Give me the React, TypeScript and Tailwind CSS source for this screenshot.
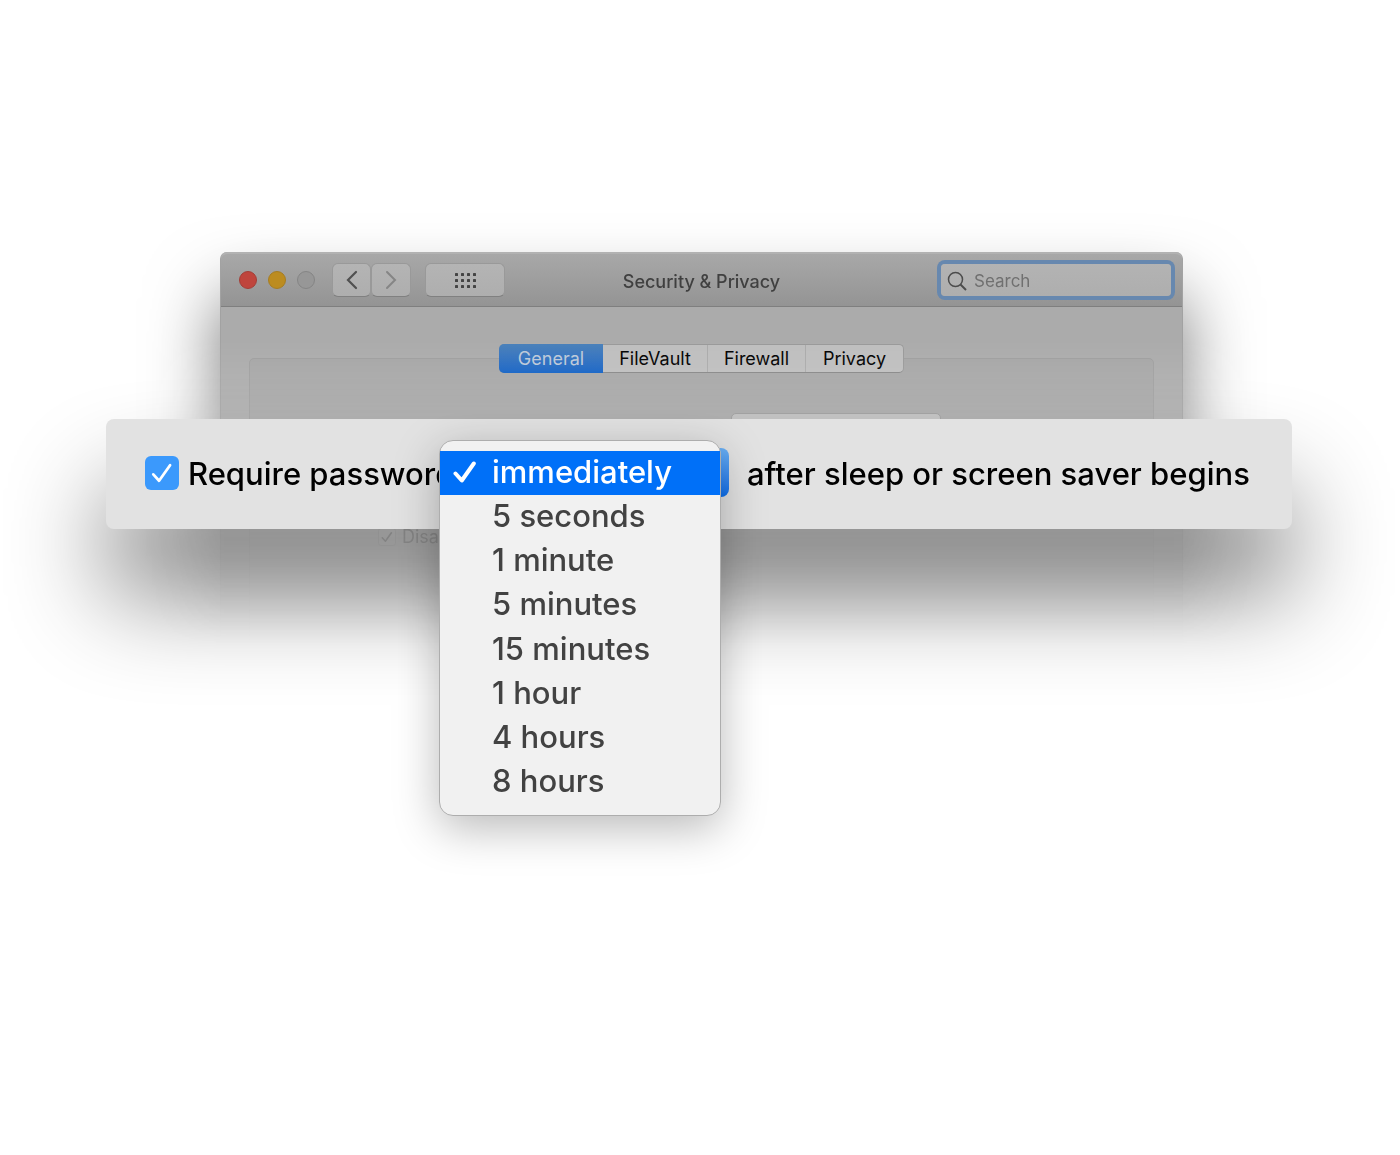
import { useState } from "react";

const delays = [
  "immediately",
  "5 seconds",
  "1 minute",
  "5 minutes",
  "15 minutes",
  "1 hour",
  "4 hours",
  "8 hours",
];

const tabs = [
  { name: "General", width: "w-[104px]" },
  { name: "FileVault", width: "w-[104px]" },
  { name: "Firewall", width: "w-[98px]" },
  { name: "Privacy", width: "w-[98px]" },
];

function CheckMark({ className }: { className: string }) {
  return (
    <svg viewBox="0 0 24 24" className={className} fill="none" stroke="currentColor" strokeLinecap="round" strokeLinejoin="round" aria-hidden="true">
      <path d="M2.5 13.5 8.8 20.5 20.8 3.5" />
    </svg>
  );
}

function Toolbar() {
  const button =
    "flex h-[34px] items-center justify-center rounded-[6px] border border-[#999999] border-b-[#808080] bg-gradient-to-b from-[#b4b4b4] to-[#aeaeae]";
  return (
    <header className="grid h-[55px] grid-cols-[1fr_auto_1fr] items-center rounded-t-[7px] border-t-2 border-b border-t-[#b2b2b2] border-b-[#7f7f7f] bg-gradient-to-b from-[#a8a8a8] to-[#949494]">
      <div className="flex items-center pl-[18px]">
        <div className="flex gap-[11px]">
          <button aria-label="Close" className="size-[18px] rounded-full border border-[#a33e37] bg-[#bf453d]" />
          <button aria-label="Minimize" className="size-[18px] rounded-full border border-[#a67d22] bg-[#bc8c20]" />
          <button aria-label="Zoom" disabled className="size-[18px] rounded-full border border-[#858585] bg-[#979797]" />
        </div>
        <div className="ml-[17px] flex">
          <button aria-label="Back" className={`${button} w-[39px] text-[#505050]`}>
            <svg viewBox="0 0 12 20" className="h-5 w-3" fill="none" stroke="currentColor" strokeWidth="2.2" strokeLinecap="round">
              <path d="M10 2 2 10l8 8" />
            </svg>
          </button>
          <button aria-label="Forward" className={`${button} w-[40px] text-[#858585]`}>
            <svg viewBox="0 0 12 20" className="h-5 w-3" fill="none" stroke="currentColor" strokeWidth="2" strokeLinecap="round">
              <path d="m2 2 8 8-8 8" />
            </svg>
          </button>
        </div>
        <button aria-label="Show all" className={`${button} ml-[14px] w-[80px]`}>
          <svg viewBox="0 0 21 15" className="h-[15px] w-[21px]" fill="#444444">
            {[0, 6, 12].map((y) => [0, 6, 12, 18].map((x) => <rect key={`${x}-${y}`} x={x} y={y} width="3" height="3" rx="0.6" />))}
          </svg>
        </button>
      </div>
      <h1 className="mt-1 text-[18px] leading-6 font-medium text-[#404040]">Security &amp; Privacy</h1>
      <div className="flex justify-end pr-[11px]">
        <label className="flex h-8 w-[230px] items-center gap-[7px] rounded-[4px] bg-gradient-to-b from-[#b3b3b3] to-[#aeaeae] pt-0.5 pl-1.5 ring-4 ring-[#6788af]">
          <svg viewBox="0 0 20 20" className="size-5 shrink-0" fill="none" stroke="#4c4c4c" strokeWidth="1.5" aria-hidden="true">
            <circle cx="8.5" cy="8.5" r="7" />
            <path d="m13.5 13.5 5.5 5.5" strokeWidth="2" />
          </svg>
          <input type="search" aria-label="Search" placeholder="Search" className="h-7 w-full min-w-0 bg-transparent text-[17px] text-[#333333] outline-none placeholder:text-[#707070]" />
        </label>
      </div>
    </header>
  );
}

function PreferencesWindow() {
  return (
    <section className="h-[540px] rounded-t-[7px] border-x border-[#a2a2a2] bg-[#ababab] shadow-[0_45px_70px_rgba(0,0,0,0.55)]">
      <Toolbar />
      <div className="px-7 pt-[37px]">
        <div role="tablist" className="relative mx-auto flex h-[29px] w-fit rounded-[5px] border border-[#999999] border-b-[#868686] bg-[#bebebe] text-[18px] text-[#000000]">
          {tabs.map((tab, i) => (
            <button
              key={tab.name}
              role="tab"
              aria-selected={i === 0}
              className={`${tab.width} border-l border-[#aaaaaa] leading-[27px] first:-my-px first:-ml-px first:rounded-l-[5px] first:border-l-0 first:bg-gradient-to-b first:from-[#4a80b9] first:to-[#0f60c4] first:leading-[29px] first:text-[#bcc8d8] nth-2:border-l-0`}
            >
              {tab.name}
            </button>
          ))}
        </div>
        <div className="-mt-[15px] h-[420px] rounded-[5px] border border-[#9e9e9e] bg-[#a6a6a6] pt-[54px]">
          <select aria-label="Message" className="ml-[481px] block h-8 w-[210px] appearance-none rounded-[5px] border border-[#979797] bg-[#bdbdbd]" />
          <label className="mt-[80px] ml-[128px] flex items-center gap-1.5 text-[18px] leading-6 text-[#404040]">
            <span className="grid size-[18px] place-items-center">
              <input type="checkbox" defaultChecked className="col-start-1 row-start-1 size-[18px] appearance-none rounded-[3px] border border-[#8d8d8d] bg-[#ababab]" />
              <CheckMark className="col-start-1 row-start-1 size-3 stroke-3" />
            </span>
            Disable automatic login
          </label>
        </div>
      </div>
    </section>
  );
}

function DelayPicker() {
  const [delay, setDelay] = useState(delays[0]);
  return (
    <div className="relative mb-[3px] w-[259px] shrink-0">
      <select
        aria-label="Password delay"
        value={delay}
        onChange={(e) => setDelay(e.target.value)}
        className="block h-[49px] w-full appearance-none rounded-[8px] bg-gradient-to-b from-[#6ab0f5] to-[#0870f0] pl-4 text-[31px] text-transparent"
      >
        {delays.map((d) => (
          <option key={d}>{d}</option>
        ))}
      </select>
      <div
        role="listbox"
        aria-label="Delay"
        className="absolute -top-2 -left-[31px] grid h-[376px] w-[282px] auto-rows-fr rounded-[14px] border border-[#adadad] bg-[#f1f1f1] pt-[10px] pb-[11px] shadow-[0_12px_46px_rgba(0,0,0,0.28)]"
      >
        {delays.map((d) => (
          <button
            key={d}
            role="option"
            aria-selected={d === delay}
            onClick={() => setDelay(d)}
            className="flex items-center pb-0.5 pl-[13px] text-left text-[31px] leading-10 text-[#424242] aria-selected:bg-[#0070f8] aria-selected:text-white"
          >
            <span className="w-[39px]">{d === delay && <CheckMark className="size-6 stroke-4" />}</span>
            {d}
          </button>
        ))}
      </div>
    </div>
  );
}

function PasswordBar() {
  return (
    <section className="flex h-[110px] items-center rounded-[8px] bg-[#e2e2e2] pl-[39px] text-[31px] leading-10 font-medium whitespace-nowrap text-black shadow-[0_68px_98px_rgba(0,0,0,0.46)]">
      <label className="flex w-[325px] shrink-0 items-center gap-[9px]">
        <span className="mb-0.5 grid size-[34px] shrink-0 place-items-center">
          <input type="checkbox" defaultChecked className="col-start-1 row-start-1 size-[34px] appearance-none rounded-[6px] bg-[#3b99fc]" />
          <CheckMark className="col-start-1 row-start-1 size-[22px] text-white stroke-3" />
        </span>
        Require password
      </label>
      <DelayPicker />
      <p className="ml-[18px]">after sleep or screen saver begins</p>
    </section>
  );
}

export default function App() {
  return (
    <main className="min-h-screen bg-white pt-[152px] pr-0.5 font-[Inter,sans-serif]">
      <div className="mx-auto grid max-w-[1186px] grid-cols-1">
        <div className="col-start-1 row-start-1 h-[500px] overflow-hidden mask-[linear-gradient(to_bottom,black_188px,rgba(0,0,0,0.85)_266px,rgba(0,0,0,0.32)_378px,transparent_493px)] pt-[100px] pr-[109px] pl-[114px]">
          <PreferencesWindow />
        </div>
        <div className="z-10 col-start-1 row-start-1 pt-[267px]">
          <PasswordBar />
        </div>
      </div>
    </main>
  );
}
